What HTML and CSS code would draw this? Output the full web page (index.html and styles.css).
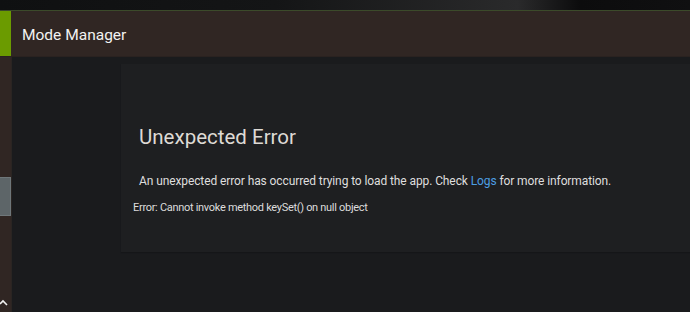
FILE: index.html
```html
<!DOCTYPE html>
<html lang="en">
<head>
  <meta charset="UTF-8">
  <meta name="viewport" content="width=device-width, initial-scale=1.0">
  <title>Mode Manager</title>
  <link rel="stylesheet" href="styles.css">
</head>
<body>
  <div class="top-band"></div>
  <div class="app">
    <div class="header">
      <div class="header-accent"></div>
      <span class="header-title">Mode Manager</span>
    </div>
    <div class="main">
      <div class="sidebar">
        <div class="sidebar-thumb"></div>
        <svg class="sidebar-caret" width="9" height="8" viewBox="0 0 9 8">
          <polyline points="0,5 3,2 7,6" fill="none" stroke="#f2f2f2" stroke-width="1.6"/>
        </svg>
      </div>
      <div class="content">
        <div class="error-card">
          <h1 class="error-title">Unexpected Error</h1>
          <p class="error-text">An unexpected error has occurred trying to load the app. Check <span class="error-link">Logs</span> for more information.</p>
          <div class="error-detail">Error: Cannot invoke method keySet() on null object</div>
        </div>
      </div>
    </div>
  </div>
</body>
</html>
```

FILE: styles.css
```css
/* Page */
html, body {
  margin: 0;
  padding: 0;
  height: 100%;
  background: #1a1b1d;
  font-family: Roboto, "Liberation Sans", Arial, sans-serif;
  color: #dcdcdc;
  overflow: hidden;
}

/* Dim strip above the app */
.top-band {
  height: 10px;
  background: linear-gradient(90deg, #0f1011 0%, #141516 40%, #2a2a2b 75%, #0c0c0d 84%, #101011 100%);
  border-bottom: 1px solid #3b4a2a;
}

.app {
  display: flex;
  flex-direction: column;
  height: calc(100% - 11px);
}

/* Header */
.header {
  display: flex;
  align-items: center;
  height: 45px;
  background: #302623;
  border-bottom: 1px solid #2a2220;
}
.header-accent {
  width: 11px;
  height: 100%;
  background: #6b9b00;
}
.header-title {
  margin-left: 11px;
  margin-top: 3px;
  font-size: 15.5px;
  color: #f2f2f2;
}

/* Body */
.main {
  display: flex;
  flex: 1;
}
.sidebar {
  width: 11px;
  background: #302623;
  border-right: 1px solid #2a2522;
  display: flex;
  flex-direction: column;
  position: relative;
}
.sidebar-thumb {
  margin-top: 120px;
  height: 37px;
  background: #5d6568;
  border: 1px solid #6f777a;
  border-left: none;
}
.sidebar-caret {
  position: absolute;
  left: 0;
  bottom: 5px;
}
.content {
  flex: 1;
  padding: 7px 0 0 109px;
}

/* Error card */
.error-card {
  background: #1e1f21;
  height: 188px;
  padding: 61px 0 0 12px;
  box-sizing: border-box;
  box-shadow: 0 1px 1px #151618;
}
.error-title {
  margin: 0 0 0 6px;
  font-size: 20.5px;
  font-weight: 400;
  color: #dedad5;
}
.error-text {
  margin: 25px 0 0 6px;
  font-size: 12px;
  letter-spacing: -0.1px;
  color: #dedede;
}
.error-link {
  color: #4c9ee3;
}
.error-detail {
  margin-top: 13px;
  font-size: 11px;
  letter-spacing: -0.3px;
  color: #dcdcdc;
}
```
